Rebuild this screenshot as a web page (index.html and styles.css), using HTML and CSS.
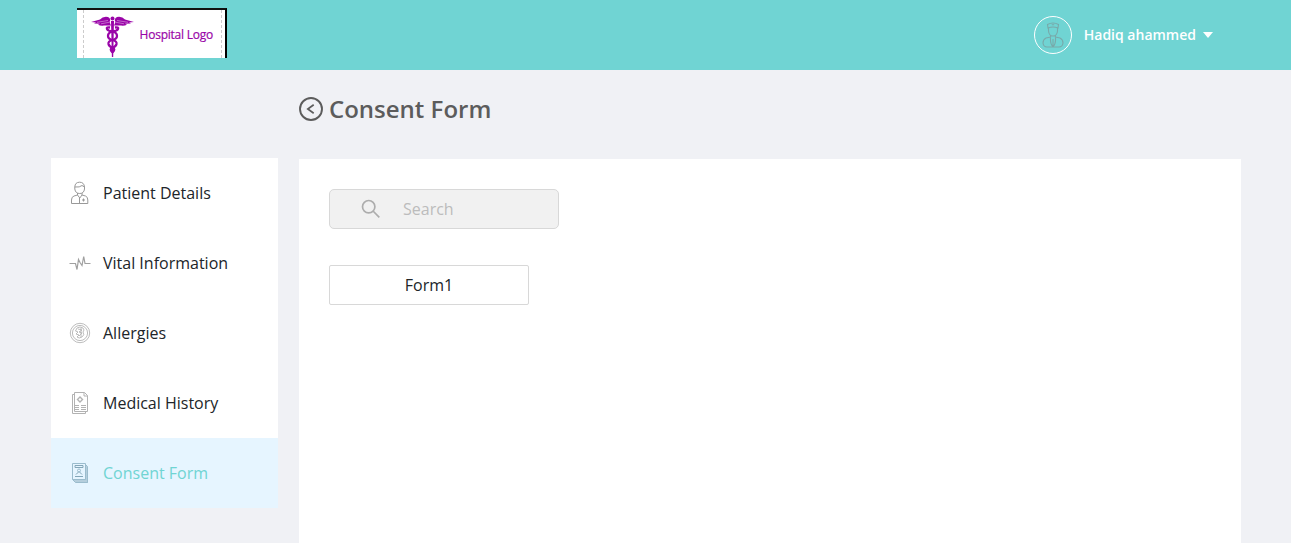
FILE: index.html
```html
<!DOCTYPE html>
<html lang="en">
<head>
<meta charset="utf-8">
<title>Consent Form</title>
<link rel="stylesheet" href="styles.css">
</head>
<body>
<header class="topbar">
  <div class="logo">
    <svg class="caduceus" width="44" height="42" viewBox="0 0 44 42" fill="#9a05a8" stroke="#9a05a8">
      <path stroke="none" d="M0 6L9 3.500Q12 0 17 1Q20.500 3 18.500 6L20 9.500H13Q10 10 7 8.800L9 7.800L3 7.500L5 6.500Z"/>
      <path stroke="none" d="M43 6L34 3.500Q31 0 26 1Q22.500 3 24.500 6L23 9.500H30Q33 10 36 8.800L34 7.800L40 7.500L38 6.500Z"/>
      <path stroke="#fff" stroke-width=".4" d="M6 6.300L17 4.500M10 7.800L18 6.300M37 6.300L26 4.500M33 7.800L25 6.300"/>
      <circle cx="21.500" cy="2.500" r="2" stroke="none"/>
      <path stroke="none" d="M20 5H23L22.200 41H20.900Z"/>
      <g fill="none" stroke-width="2.300">
        <path d="M19 11.500Q15 11 16 13Q17 15 21.500 15.500Q26 16.500 26 20Q26 23 21.500 24Q17 25 17.500 28Q18 30.500 21.500 31.500Q25 33 21.500 36.500"/>
        <path d="M24 11.500Q28 11 27 13Q26 15 21.500 15.500Q17 16.500 17 20Q17 23 21.500 24Q26 25 25.500 28Q25 30.500 21.500 31.500Q18 33 21.500 36.500"/>
      </g>
    </svg>
    <span class="logo-text">Hospital Logo</span>
  </div>
  <div class="account">
    <span class="avatar">
      <svg width="22" height="26" viewBox="0 0 22 26" fill="none" stroke="#78a9aa" stroke-width="1.100">
        <path d="M6 6L5.500 2.500Q11 -.6 16.500 2.500L16 6Q11 4 6 6ZM6.500 6V9Q7 14 11 14T15.500 9V6M9.800 2.800H12.200M8.500 13V15L4 16Q1 17.500 1 21Q1.500 25 5 25H17Q20.500 25 21 21Q21 17.500 18 16L13.500 15V13M8.500 15Q8 22 11 24.500Q14 22 13.500 15M11 17V24"/>
      </svg>
    </span>
    <span class="account-name">Hadiq ahammed</span>
    <span class="caret"></span>
  </div>
</header>
<div class="page">
  <nav class="sidebar">
    <a class="item">
      <svg class="icon" width="22" height="24" viewBox="0 0 22 24" fill="none" stroke="#999" stroke-width="1">
        <path d="M5.800 6Q6 1.300 10.500 1.200T15.500 6V8Q15 12.500 10.700 12.500T5.800 8ZM5.800 6Q11 6.500 13 4.500L15.500 6M8.500 12V14L5 15Q2.500 15.800 2.500 19V22.500H18.800V19Q18.800 15.800 16.500 15L13 14V12M8.500 14L10.800 17L13 14M10.500 17V22M14.500 17.500V20.500M13 19H16"/>
      </svg>
      <span>Patient Details</span>
    </a>
    <a class="item">
      <svg class="icon" width="22" height="24" viewBox="0 0 22 24" fill="none" stroke="#a0a0a0" stroke-width="1.200">
        <path d="M.5 12.500H6.500L8 18.500L9.500 8.500L11 11.500L13 14.500L14.700 5.500L16 12.500H21.500"/>
      </svg>
      <span>Vital Information</span>
    </a>
    <a class="item">
      <svg class="icon" width="22" height="24" viewBox="0 0 22 24" fill="none" stroke="#b4b4b4" stroke-width=".9">
        <circle cx="11" cy="12" r="9.700"/><circle cx="11" cy="12" r="7.600"/>
        <path d="M8 7Q11 5 14 7Q16 9 14 11Q16 14 13 16Q10 18 8 16L10 14L7 13L9 11L6.500 10ZM9 8L13 9L10 11L13 12L10 15M12 7V16"/>
      </svg>
      <span>Allergies</span>
    </a>
    <a class="item">
      <svg class="icon" width="22" height="24" viewBox="0 0 22 24" fill="none" stroke="#b2b2b2" stroke-width="1">
        <path d="M5.500 1.500H15.500L18.500 4.500V20.500H5.500ZM15 1.500V5H18.500M5.500 3.500H3.500V22.500H16.500V20.500M5.500 14.500H10M12 14.500H17M5.500 16.500H10M12 16.500H17M5.500 18.500H10M12 18.500H17"/>
        <path stroke-width="1.400" d="M11 6L13.500 8.500L11 11L8.500 8.500Z"/>
      </svg>
      <span>Medical History</span>
    </a>
    <a class="item active">
      <svg class="icon" width="22" height="24" viewBox="0 0 22 24" fill="none" stroke="#9bbccd" stroke-width="1">
        <path fill="#b5cedc" stroke="none" d="M16 3L19 6V22H7L4 19H16Z"/>
        <path d="M3.500 2.500H16.500V18.500H3.500ZM16.500 3.500L18.500 5.500V21.500H6.500L3.500 18.500"/>
        <path stroke="#83a6b8" d="M6 4.500H14V6.500H6ZM6 15.500H14M7 13.500L10 10.500L13 13.500"/>
        <circle cx="10" cy="9.500" r="1.500"/>
      </svg>
      <span>Consent Form</span>
    </a>
  </nav>
  <main class="content">
    <div class="heading">
      <svg width="24" height="24" viewBox="0 0 24 24" fill="none" stroke="#5c5c5c" stroke-width="1.900">
        <circle cx="12" cy="12" r="11"/>
        <path stroke-width="1.700" d="M14.700 7.700L8.800 12L14.700 16.300"/>
      </svg>
      <h1>Consent Form</h1>
    </div>
    <section class="panel">
      <div class="search">
        <svg width="20" height="20" viewBox="0 0 20 20" fill="none" stroke="#adadad" stroke-width="1.700">
          <circle cx="7.700" cy="7.700" r="6.200"/><path d="M12 12L18.300 18.300"/>
        </svg>
        <span>Search</span>
      </div>
      <div class="form-card">Form1</div>
    </section>
  </main>
</div>
</body>
</html>
```
FILE: styles.css
```css
* { box-sizing: border-box; }
body {
  margin: 0;
  height: 543px;
  overflow: hidden;
  background: #f0f1f5;
  font: 16px/24px "Open Sans", sans-serif;
  color: #212529;
}
svg { display: block; flex: none; }
.topbar {
  height: 70px;
  padding: 8px 78px 0 77px;
  display: flex;
  justify-content: space-between;
  background: #70d4d3;
}
.logo {
  width: 150px;
  height: 50px;
  display: flex;
  background: repeating-linear-gradient(#ccc 0 3px, #fff 3px 5px) 6px 0 / 1px 48px no-repeat,
    repeating-linear-gradient(#ccc 0 3px, #fff 3px 5px) 144px 0 / 1px 48px no-repeat,
    #fff;
  border-top: 2px solid #111;
  border-right: 2px solid #000;
}
.caduceus { margin: 6px 0 0 14px; }
.logo-text {
  margin: 13px 0 0 4.5px;
  font-size: 12px;
  font-weight: 500;
  letter-spacing: -.22px;
  color: #9a05a8;
  -webkit-text-stroke: .2px #9a05a8;
  white-space: nowrap;
}
.account {
  display: flex;
  align-items: center;
  height: 54px;
  color: #fff;
}
.avatar {
  width: 38px;
  height: 38px;
  display: grid;
  place-items: center;
  border: 1px solid #fff;
  border-radius: 50%;
}
.account-name {
  margin-left: 12px;
  font-size: 14px;
  font-weight: 600;
}
.caret {
  margin-left: 7px;
  border: 5px solid transparent;
  border-top: 6px solid #fff;
  border-bottom: 0;
}
.page {
  display: flex;
  align-items: flex-start;
  gap: 21px;
  padding: 0 50px 0 51px;
}
.sidebar {
  width: 227px;
  margin-top: 88px;
  background: #fff;
}
.item {
  height: 70px;
  padding-left: 18px;
  display: flex;
  align-items: center;
  gap: 12px;
}
.active {
  background: #e6f5ff;
  color: #70d4d3;
}
.content { flex: 1; }
.heading {
  height: 89px;
  padding-top: 21px;
  display: flex;
  align-items: flex-start;
  gap: 6px;
  color: #5c5c5c;
}
.heading svg { margin-top: 6px; }
h1 {
  margin: 0;
  font-size: 24px;
  line-height: 36px;
  font-weight: 600;
}
.panel {
  height: 384px;
  padding: 30px;
  background: #fff;
}
.search {
  width: 230px;
  height: 40px;
  padding-left: 31px;
  display: flex;
  align-items: center;
  gap: 22px;
  background: #f1f1f1;
  border: 1px solid #d8d8d8;
  border-radius: 5px;
  color: #bcbcbc;
}
.form-card {
  width: 200px;
  height: 40px;
  margin-top: 36px;
  display: grid;
  place-items: center;
  border: 1px solid #d8d8d8;
  border-radius: 2px;
}
```
